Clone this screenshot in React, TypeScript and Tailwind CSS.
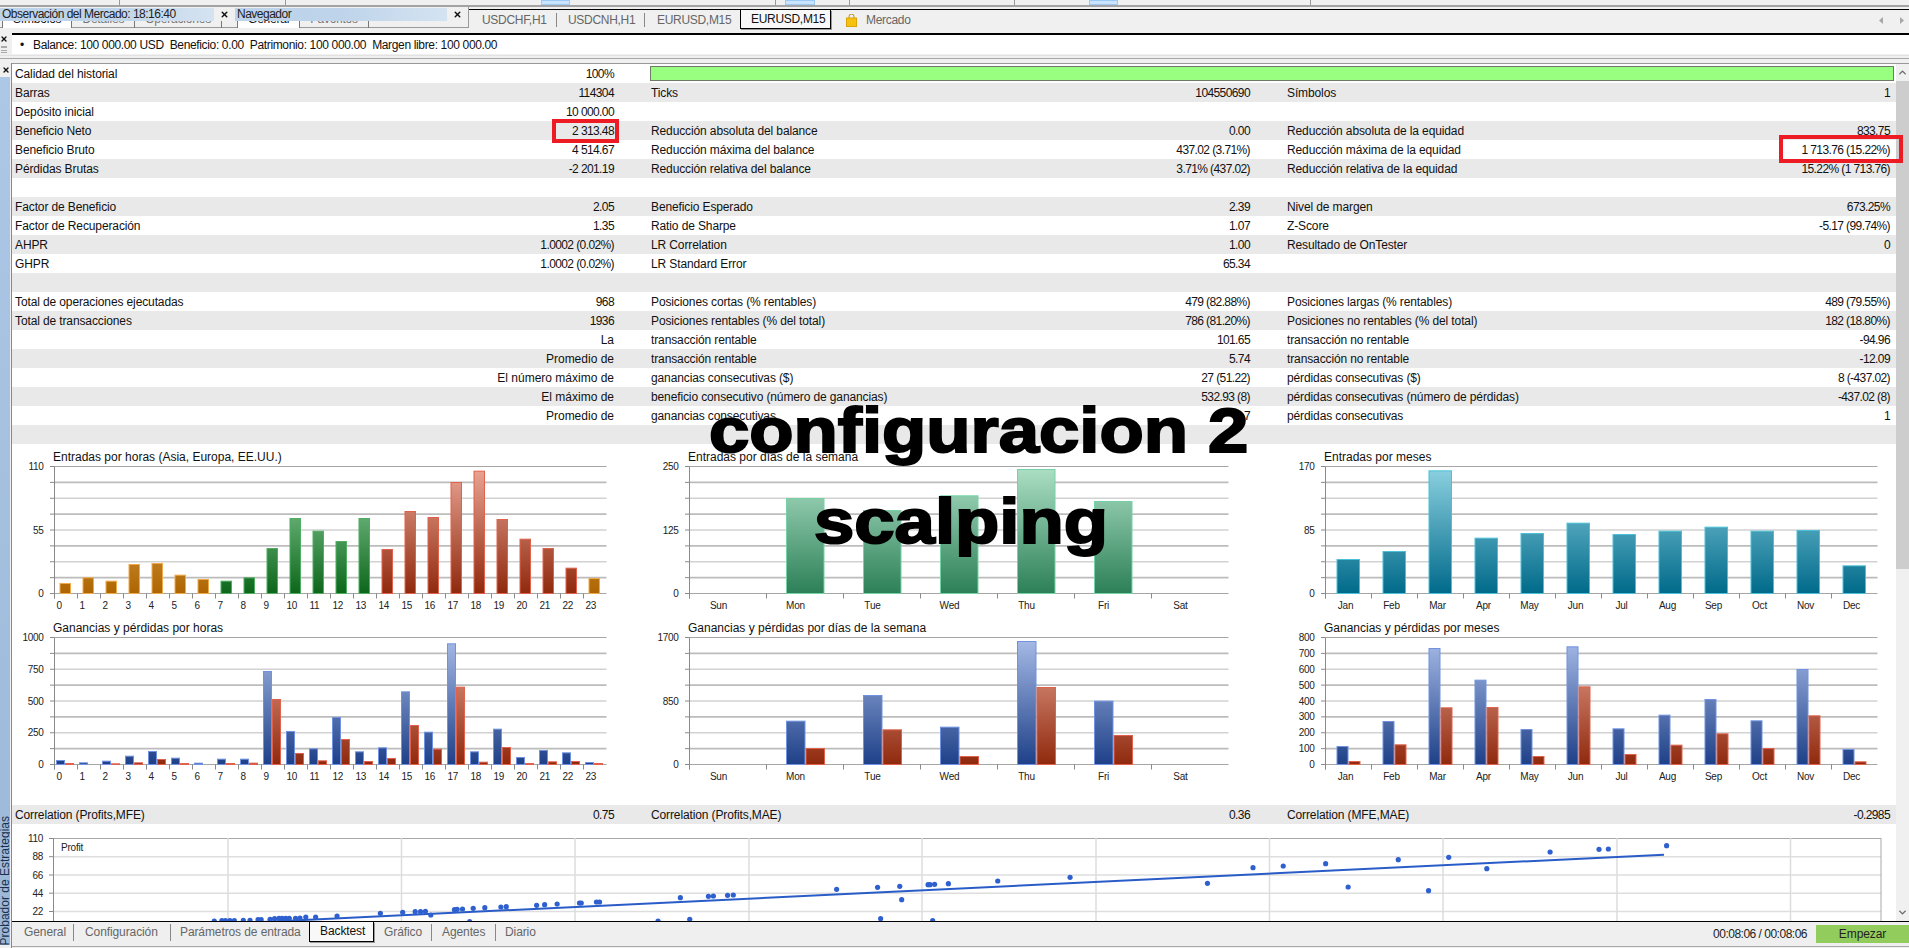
import React from "react";
import { X, ChevronUp, ChevronDown } from "lucide-react";

const GRADS: Record<string, [string, string, string]> = {
  orange: ["#f0c080", "#ad6500", "#efaa4c"],
  green: ["#98d8a8", "#0c661a", "#4fae62"],
  red: ["#eba796", "#8f290d", "#e0624c"],
  blue: ["#a8bce8", "#1e4088", "#7092e0"],
  sea: ["#aee0c6", "#2c8058", "#74d2a4"],
  teal: ["#8ed2e2", "#006a8a", "#4cc0d8"],
};

type Bar = { x: number; w: number; top: number; c: string };

function Chart({
  title,
  labels,
  ylabels,
  plotW,
  bars,
  base,
  catOffset,
  anchorMiddle,
  id,
  h,
}: {
  title: string;
  labels: string[];
  ylabels: string[];
  plotW: number;
  bars: Bar[];
  base: number;
  catOffset: number;
  anchorMiddle: boolean;
  id: string;
  h: number;
}) {
  const ax = 42.5;
  const top = 2.5;
  const bot = 129.5;
  const step = (bot - top) / 8;
  const cat = plotW / labels.length;
  const lines = Array.from({ length: 9 }, (_, i) => top + step * i);
  return (
    <div className="pt-[6px]">
      <div className="pl-[41px] h-[14px] leading-[14px] text-[12px] text-[#111] whitespace-nowrap">{title}</div>
      <svg width="630" height={h} className="block overflow-visible">
        <defs>
          {Object.entries(GRADS).map(([k, v]) => (
            <linearGradient key={k} id={id + k} gradientUnits="userSpaceOnUse" x1="0" x2="0" y1={top} y2={bot}>
              <stop offset="0" stopColor={v[0]} />
              <stop offset="1" stopColor={v[1]} />
            </linearGradient>
          ))}
        </defs>
        {lines.map((y, i) => (
          <g key={i}>
            <line
              x1={ax}
              x2={ax + plotW}
              y1={y}
              y2={y}
              stroke={i === 0 || i === 8 ? "#a6a6a6" : i % 2 ? "#bcbcbc" : "#d2d2d2"}
              strokeWidth={i === 0 || i === 8 ? 1 : 1.6}
            />
            <line x1={ax - 4.5} x2={ax} y1={y} y2={y} stroke="#8a8a8a" />
          </g>
        ))}
        <line x1={ax} x2={ax} y1={top} y2={bot + 5} stroke="#8a8a8a" />
        {labels.map((l, i) => (
          <g key={l}>
            <line x1={ax + cat * i} x2={ax + cat * i} y1={bot} y2={bot + 5} stroke="#8a8a8a" />
            <text
              x={ax + cat * i + catOffset}
              y={bot + 15}
              textAnchor={anchorMiddle ? "middle" : "start"}
              className="text-[10px] tracking-[-0.2px]"
              fill="#222"
            >
              {l}
            </text>
          </g>
        ))}
        {ylabels.map((l, i) => (
          <text
            key={l}
            x={ax - 11}
            y={bot - (i / (ylabels.length - 1)) * 127 + 3.5}
            textAnchor="end"
            className="text-[10px] tracking-[-0.3px]"
            fill="#222"
          >
            {l}
          </text>
        ))}
        {bars.map((b, i) => (
          <rect
            key={i}
            x={ax + b.x + 0.5}
            y={bot - (base - b.top) / 3}
            width={b.w - 1}
            height={(base - b.top) / 3}
            fill={`url(#${id}${b.c})`}
            stroke={GRADS[b.c][2]}
            strokeWidth="1"
          />
        ))}
      </svg>
    </div>
  );
}

const hours = Array.from({ length: 24 }, (_, i) => String(i));
const days = ["Sun", "Mon", "Tue", "Wed", "Thu", "Fri", "Sat"];
const months = ["Jan", "Feb", "Mar", "Apr", "May", "Jun", "Jul", "Aug", "Sep", "Oct", "Nov", "Dec"];

const hourTops = [430, 413, 423, 373, 370, 405, 418, 423, 413, 325, 235, 273, 304, 235, 328, 214, 232, 127, 93, 238, 297, 325, 384, 415];
const hourPL = [
  [961, 970], [968, 973], [963, 971], [948, 968], [934, 958], [954, 970], [969, 973], [957, 970],
  [957, 969], [694, 778], [874, 940], [926, 962], [832, 898], [935, 964], [923, 955], [755, 856],
  [876, 927], [611, 741], [935, 966], [867, 922], [952, 970], [931, 965], [938, 964], [967, 970],
];
const dayTops: (number | null)[] = [null, 175, 211, 167, 88, 184, null];
const dayPL: (number[] | null)[] = [null, [843, 925], [766, 869], [861, 949], [604, 742], [783, 886], null];
const monthTops = [358, 334, 92, 294, 280, 249, 283, 273, 261, 273, 271, 377];
const monthPL = [
  [919, 964], [844, 914], [625, 803], [720, 802], [868, 949], [620, 740],
  [866, 943], [825, 915], [778, 881], [842, 925], [688, 827], [928, 965],
];

const hourBars: Bar[] = hourTops.map((t, i) => ({
  x: 23 * i + 5,
  w: 11.5,
  top: t,
  c: i <= 6 || i === 23 ? "orange" : i <= 13 ? "green" : "red",
}));
const hourPLBars: Bar[] = hourPL.flatMap(([a, b], i) => [
  { x: 23 * i + 1.5, w: 9, top: a, c: "blue" },
  { x: 23 * i + 10.5, w: 9, top: b, c: "red" },
]);
const dayBars: Bar[] = dayTops.flatMap((t, i) => (t === null ? [] : [{ x: 77 * i + 19.5, w: 38.5, top: t, c: "sea" }]));
const dayPLBars: Bar[] = dayPL.flatMap((p, i) =>
  p === null
    ? []
    : [
        { x: 77 * i + 19.5, w: 19.5, top: p[0], c: "blue" },
        { x: 77 * i + 39, w: 19.5, top: p[1], c: "red" },
      ],
);
const monthBars: Bar[] = monthTops.map((t, i) => ({ x: 46 * i + 11, w: 23.5, top: t, c: "teal" }));
const monthPLBars: Bar[] = monthPL.flatMap(([a, b], i) => [
  { x: 46 * i + 11, w: 12, top: a, c: "blue" },
  { x: 46 * i + 23, w: 12, top: b, c: "red" },
]);

const rows: string[][] = [
  ["Calidad del historial", "100%"],
  ["Barras", "114304", "Ticks", "104550690", "Símbolos", "1"],
  ["Depósito inicial", "10 000.00"],
  ["Beneficio Neto", "2 313.48", "Reducción absoluta del balance", "0.00", "Reducción absoluta de la equidad", "833.75"],
  ["Beneficio Bruto", "4 514.67", "Reducción máxima del balance", "437.02 (3.71%)", "Reducción máxima de la equidad", "1 713.76 (15.22%)"],
  ["Pérdidas Brutas", "-2 201.19", "Reducción relativa del balance", "3.71% (437.02)", "Reducción relativa de la equidad", "15.22% (1 713.76)"],
  [],
  ["Factor de Beneficio", "2.05", "Beneficio Esperado", "2.39", "Nivel de margen", "673.25%"],
  ["Factor de Recuperación", "1.35", "Ratio de Sharpe", "1.07", "Z-Score", "-5.17 (99.74%)"],
  ["AHPR", "1.0002 (0.02%)", "LR Correlation", "1.00", "Resultado de OnTester", "0"],
  ["GHPR", "1.0002 (0.02%)", "LR Standard Error", "65.34"],
  [],
  ["Total de operaciones ejecutadas", "968", "Posiciones cortas (% rentables)", "479 (82.88%)", "Posiciones largas (% rentables)", "489 (79.55%)"],
  ["Total de transacciones", "1936", "Posiciones rentables (% del total)", "786 (81.20%)", "Posiciones no rentables (% del total)", "182 (18.80%)"],
  ["", "La", "transacción rentable", "101.65", "transacción no rentable", "-94.96"],
  ["", "Promedio de", "transacción rentable", "5.74", "transacción no rentable", "-12.09"],
  ["", "El número máximo de", "ganancias consecutivas ($)", "27 (51.22)", "pérdidas consecutivas ($)", "8 (-437.02)"],
  ["", "El máximo de", "beneficio consecutivo (número de ganancias)", "532.93 (8)", "pérdidas consecutivas (número de pérdidas)", "-437.02 (8)"],
  ["", "Promedio de", "ganancias consecutivas", "7", "pérdidas consecutivas", "1"],
  [],
];

function Val({ v }: { v?: string }) {
  const numeric = !!v && /^[-\d]/.test(v);
  return <span className={numeric ? "tracking-[-0.6px]" : "tracking-normal"}>{v}</span>;
}

function Row({ r, gray }: { r: string[]; gray: boolean }) {
  return (
    <div className={`grid grid-cols-[635px_636px_612px] h-[19px] leading-[21px] text-[12px] tracking-[-0.12px] text-[#111] whitespace-nowrap overflow-hidden ${gray ? "bg-[#e9e9e9]" : "bg-white"}`}>
      <div className="flex justify-between pl-[3px] pr-[33px]"><span>{r[0]}</span><Val v={r[1]} /></div>
      <div className="flex justify-between pl-1 pr-[33px]"><span>{r[2]}</span><Val v={r[3]} /></div>
      <div className="flex justify-between pl-1 pr-[5px]"><span>{r[4]}</span><Val v={r[5]} /></div>
    </div>
  );
}

const scatter: number[][] = [
  ...[
    [480, 393], [497, 392], [505, 392], [515, 392], [525, 392], [545, 391], [560, 391], [578, 389], [585, 389],
    [605, 388], [615, 386], [625, 385], [632, 385], [640, 385], [648, 385], [662, 385], [672, 384], [685, 381],
    [707, 381], [755, 378], [852, 370], [902, 367], [930, 365], [942, 365], [953, 364], [965, 375], [1018, 359],
    [1024, 358], [1036, 357], [1060, 355], [1086, 353], [1122, 351], [1134, 350], [1202, 346], [1220, 344],
    [1248, 342], [1298, 339], [1302, 339], [1336, 336], [1343, 336], [1524, 323], [1474, 393], [1545, 388], [1052, 395],
  ].map(([x, y]) => [x / 2.24, 790 + y / 3]),
  ...[
    [22, 319], [35, 318], [72, 316], [87, 315], [357, 298], [464, 292], [522, 289], [527, 329], [472, 386], [608, 392],
    [596, 284], [601, 284], [613, 283], [649, 281], [778, 273], [967, 262], [1326, 280], [1445, 233], [1524, 228],
  ].map(([x, y]) => [700 + x / 2.613, 790 + y / 3]),
  ...[
    [66, 221], [124, 291], [253, 209], [331, 302], [383, 202], [481, 236], [644, 186], [770, 178], [794, 177], [944, 167],
  ].map(([x, y]) => [1300 + x / 2.575, 790 + y / 3]),
];

function Scatter() {
  const gridY = [838.5, 856.7, 875, 893.2, 911.5];
  const labels = ["110", "88", "66", "44", "22"];
  const gridX = [228, 401.5, 575, 749, 922, 1096, 1269.5, 1443, 1617, 1790.5];
  return (
    <svg viewBox="12 824 1884 97" width="1884" height="97" className="block bg-white">
      {gridY.map((y, i) => (
        <g key={y}>
          <line x1="53.5" x2="1881" y1={y} y2={y} stroke={i === 0 ? "#a8a8a8" : "#dedede"} strokeWidth={i === 0 ? 1 : 1.6} />
          <line x1="49" x2="53.5" y1={y} y2={y} stroke="#8a8a8a" />
          <text x="43" y={y + 3.5} textAnchor="end" className="text-[10px] tracking-[-0.3px]" fill="#222">{labels[i]}</text>
        </g>
      ))}
      {gridX.map((x) => (
        <line key={x} x1={x} x2={x} y1="838" y2="921" stroke="#dcdcdc" strokeWidth="1.5" />
      ))}
      <line x1="53.5" x2="53.5" y1="838" y2="921" stroke="#8a8a8a" />
      <line x1="1881" x2="1881" y1="838" y2="921" stroke="#a8a8a8" />
      <text x="61" y="851" className="text-[10px] tracking-[-0.2px]" fill="#222">Profit</text>
      <line x1="200" y1="925" x2="1664" y2="854.7" stroke="#2a5cc8" strokeWidth="2" />
      {scatter.map(([x, y], i) => (
        <circle key={i} cx={x} cy={y} r="2.6" fill="#2f60cf" />
      ))}
    </svg>
  );
}

function Panel({ title, w, tabs }: { title: string; w: number; tabs: string[] }) {
  return (
    <div className="relative h-[20px] overflow-hidden" style={{ width: w }}>
      <div className="flex pt-[4px] pl-[2px] text-[12px] tracking-[-0.2px] leading-[14px] whitespace-nowrap">
        {tabs.map((t, i) => (
          <div key={t} className={`px-[10px] h-[16px] border-r border-[#777] ${i === 0 ? "bg-white text-[#111] border-l" : "text-[#777]"}`}>{t}</div>
        ))}
      </div>
      <div className="absolute left-0 right-[21px] top-0 h-[13px] leading-[13px] pl-[2px] text-[12px] tracking-[-0.5px] text-[#222] whitespace-nowrap overflow-hidden bg-gradient-to-r from-[#bcd3ea] via-[#bed4ea] to-[#d5e3f1]">
        {title}
      </div>
      <div className="absolute right-0 top-0 w-[21px] h-[13px] bg-[#f0f0f0] flex items-center justify-center">
        <X size={9} strokeWidth={4} className="text-[#111]" />
      </div>
    </div>
  );
}

function Sep({ w }: { w: number }) {
  return <div className="border-r border-[#999] h-full shrink-0" style={{ width: w }} />;
}
function Blue({ w, ml }: { w: number; ml: number }) {
  return <div className="bg-[#cce4fb] border border-[#99c9f5] h-full shrink-0" style={{ width: w, marginLeft: ml }} />;
}

export default function App() {
  return (
    <div className="relative w-[1909px] h-[948px] overflow-hidden bg-[#f0f0f0] font-['Liberation_Sans',sans-serif] flex flex-col">
      {/* top toolbar strip */}
      <div className="flex h-[5px] shrink-0">
        <Sep w={120} />
        <Sep w={166} />
        <Blue w={29} ml={255} />
        <Sep w={206} />
        <Blue w={30} ml={9} />
        <Sep w={35} />
        <Sep w={165} />
        <Blue w={29} ml={74} />
        <Sep w={193} />
      </div>
      <div className="h-[2px] bg-[#a3a3a3] shrink-0" />

      {/* tabs */}
      <div className="flex h-[26px] shrink-0">
        <div className="w-[469px] shrink-0">
          <div className="flex h-[21px] pt-px border-b border-r border-[#9a9a9a]">
            <Panel title="Observación del Mercado:  18:16:40" w={235} tabs={["Símbolos", "Detalles", "Operaciones"]} />
            <Panel title="Navegador" w={233} tabs={["General", "Favoritos"]} />
          </div>
        </div>
        <div className="flex-1 mt-[2px] border-t border-black flex items-start text-[12px] tracking-[-0.3px] text-[#666] whitespace-nowrap">
          <div className="flex w-full h-[20px] items-center pl-[13px]">
            <div className="w-[75px] border-r border-[#888] leading-[14px]">USDCHF,H1</div>
            <div className="w-[88px] pl-[11px] border-r border-[#888] leading-[14px]">USDCNH,H1</div>
            <div className="w-[95px] pl-[12px] leading-[14px]">EURUSD,M15</div>
            <div className="w-[91px] h-[19px] self-start pl-[10px] leading-[19px] text-[#111] bg-[#f8f8f8] border-x border-b border-black shadow-[1px_1px_0_#999]">EURUSD,M15</div>
            <svg width="11" height="13" viewBox="0 0 11 13" className="ml-[15px]">
              <path d="M3 4V2.5a2.5 2.5 0 0 1 5 0V4" fill="none" stroke="#b88a1a" strokeWidth="1" />
              <rect x="0.5" y="4" width="10" height="8.5" fill="#f6c20f" stroke="#d9a60a" />
            </svg>
            <div className="ml-[9px]">Mercado</div>
            <div className="ml-auto flex items-center gap-[17px] pr-[5px]">
              <svg width="4" height="7" viewBox="0 0 4 7"><path d="M4 0v7L0 3.5z" fill="#a8a8a8" /></svg>
              <svg width="4" height="7" viewBox="0 0 4 7"><path d="M0 0v7l4-3.5z" fill="#a8a8a8" /></svg>
            </div>
          </div>
        </div>
      </div>

      {/* balance */}
      <div className="flex h-[21px] shrink-0">
        <div className="w-[12px] shrink-0 flex flex-col items-center pt-[2px] gap-[3px]">
          <X size={8} strokeWidth={4} className="text-[#111] -ml-[4px]" />
          <div className="w-[6px] h-[7px] -ml-[4px] border-y border-[#aaa] bg-[repeating-linear-gradient(#aaa_0_1px,transparent_1px_3px)]" />
        </div>
        <div className="flex-1 bg-white border-t-2 border-black flex items-center pt-px text-[12px] text-[#111] whitespace-nowrap">
          <span className="ml-[8px] w-[13px]">•</span>
          <span className="tracking-[-0.35px]">Balance: 100 000.00 USD&nbsp;&nbsp;Beneficio: 0.00&nbsp;&nbsp;Patrimonio: 100 000.00&nbsp;&nbsp;Margen libre: 100 000.00</span>
        </div>
      </div>
      <div className="h-[9px] shrink-0 flex flex-col">
        <div className="h-px mt-px bg-[#e2e2e2]" />
        <div className="h-px mt-[2px] bg-[#a8a8a8]" />
      </div>

      {/* main */}
      <div className="flex flex-1 min-h-0">
        <div className="w-[12px] shrink-0 flex flex-col border-r border-[#888]">
          <div className="h-[14px] flex items-center pl-[2px]"><X size={8} strokeWidth={4} className="text-[#111]" /></div>
          <div className="w-[10px] h-[868px] bg-gradient-to-b from-[#adc8e6] to-[#9cb8d8] flex flex-col justify-end items-center overflow-hidden">
            <span className="[writing-mode:vertical-rl] rotate-180 text-[12px] leading-[10px] text-[#1a2f4a] whitespace-nowrap pb-[5px]">Probador de Estrategias</span>
          </div>
        </div>
        <div className="flex-1 flex flex-col min-w-0">
          <div className="flex h-[858px] shrink-0 overflow-hidden border-t border-[#999]">
            <div className="w-[1884px] shrink-0 bg-white">
              {rows.map((r, i) =>
                i === 0 ? (
                  <div key={i} className="grid grid-cols-[635px_1fr] h-[19px] leading-[21px] text-[12px] tracking-[-0.12px] text-[#111] bg-white">
                    <div className="flex justify-between pl-[3px] pr-[33px]"><span>{r[0]}</span><Val v={r[1]} /></div>
                    <div className="pl-[3px] pr-[2px] pt-[2px]">
                      <div className="h-[15px] bg-[#98ff80] border border-[#6e7a68]" />
                    </div>
                  </div>
                ) : (
                  <Row key={i} r={r} gray={i % 2 === 1} />
                ),
              )}
              <div className="h-[361px] grid grid-cols-[635px_636px_612px] overflow-hidden">
                <div>
                  <Chart id="a" title="Entradas por horas (Asia, Europa, EE.UU.)" labels={hours} ylabels={["0", "55", "110"]} plotW={552} bars={hourBars} base={460} catOffset={2} anchorMiddle={false} h={151} />
                  <Chart id="b" title="Ganancias y pérdidas por horas" labels={hours} ylabels={["0", "250", "500", "750", "1000"]} plotW={552} bars={hourPLBars} base={973} catOffset={2} anchorMiddle={false} h={170} />
                </div>
                <div>
                  <Chart id="c" title="Entradas por días de la semana" labels={days} ylabels={["0", "125", "250"]} plotW={539} bars={dayBars} base={460} catOffset={29} anchorMiddle h={151} />
                  <Chart id="d" title="Ganancias y pérdidas por días de la semana" labels={days} ylabels={["0", "850", "1700"]} plotW={539} bars={dayPLBars} base={973} catOffset={29} anchorMiddle h={170} />
                </div>
                <div>
                  <Chart id="e" title="Entradas por meses" labels={months} ylabels={["0", "85", "170"]} plotW={552} bars={monthBars} base={460} catOffset={20} anchorMiddle h={151} />
                  <Chart id="f" title="Ganancias y pérdidas por meses" labels={months} ylabels={["0", "100", "200", "300", "400", "500", "600", "700", "800"]} plotW={552} bars={monthPLBars} base={973} catOffset={20} anchorMiddle h={170} />
                </div>
              </div>
              <Row r={["Correlation (Profits,MFE)", "0.75", "Correlation (Profits,MAE)", "0.36", "Correlation (MFE,MAE)", "-0.2985"]} gray />
              <Scatter />
            </div>
            <div className="w-[13px] shrink-0 flex flex-col items-center bg-[#f0f0f0]">
              <div className="h-[17px] flex items-center"><ChevronUp size={11} strokeWidth={3} className="text-[#666]" /></div>
              <div className="w-full h-[488px] bg-[#cdcdcd]" />
              <div className="flex-1" />
              <div className="h-[17px] flex items-center"><ChevronDown size={11} strokeWidth={3} className="text-[#666]" /></div>
            </div>
          </div>
          {/* bottom tabs */}
          <div className="h-[24px] shrink-0 border-t border-black flex items-start text-[12px] tracking-[-0.1px] text-[#666] whitespace-nowrap bg-[#efefef]">
            <div className="pl-[12px] w-[62px] h-[17px] mt-[2px] leading-[16px] border-r border-[#888]">General</div>
            <div className="pl-[11px] w-[97px] h-[17px] mt-[2px] leading-[16px] border-r border-[#888]">Configuración</div>
            <div className="pl-[9px] w-[138px] h-[17px] mt-[2px] leading-[16px]">Parámetros de entrada</div>
            <div className="w-[65px] h-[20px] pl-[10px] leading-[19px] text-[#111] bg-[#f8f8f8] border-x border-b border-black shadow-[1px_1px_0_#999]">Backtest</div>
            <div className="pl-[10px] w-[58px] h-[17px] mt-[2px] leading-[16px] border-r border-[#888]">Gráfico</div>
            <div className="pl-[10px] w-[64px] h-[17px] mt-[2px] leading-[16px] border-r border-[#888]">Agentes</div>
            <div className="pl-[9px] mt-[2px] leading-[16px]">Diario</div>
            <div className="ml-auto flex items-center mt-[2px] h-[19px]">
              <span className="text-[#222] tracking-[-0.5px] mr-[9px]">00:08:06 / 00:08:06</span>
              <div className="w-[93px] h-[18px] bg-[#92cc5c] text-[#222] text-center leading-[18px]">Empezar</div>
            </div>
          </div>
          <div className="h-px mt-[1px] bg-[#a8a8a8] shrink-0" />
        </div>
      </div>

      {/* overlays */}
      <div className="absolute left-[552px] top-[119px] w-[67px] h-[24px] border-4 border-[#ed1c24]" />
      <div className="absolute left-[1779px] top-[135px] w-[124px] h-[28px] border-4 border-[#ed1c24]" />
      <div className="absolute left-[709px] top-[399px] origin-left scale-x-[1.15] text-[63px] leading-none font-bold text-black whitespace-nowrap [-webkit-text-stroke:2px_black]">configuracion 2</div>
      <div className="absolute left-[814px] top-[490px] origin-left scale-x-[1.15] text-[63px] leading-none font-bold text-black whitespace-nowrap [-webkit-text-stroke:2px_black]">scalping</div>
    </div>
  );
}
